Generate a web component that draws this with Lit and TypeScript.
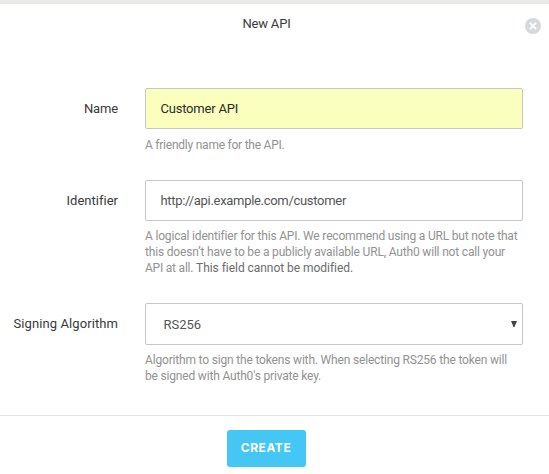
import { LitElement, html, css, type TemplateResult } from "lit";
import { customElement, property } from "lit/decorators.js";
import { styleMap } from "lit/directives/style-map.js";

const track = (value: number) => styleMap({ letterSpacing: `${value}px` });
const line = (text: string, spacing: number) =>
  html`<div class="line" style=${track(spacing)}>${text}</div>`;

@customElement("form-row")
class FormRow extends LitElement {
  @property() label = "";
  @property({ type: Number }) spacing = 0;

  static styles = css`
    :host { display: grid; grid-template-columns: 118px 378px; column-gap: 27px; }
    .label { text-align: right; font-size: 13px; line-height: 41px; color: #3a3a3a; white-space: nowrap; }
  `;

  render() {
    return html`
      <div class="label" style=${track(this.spacing)}>${this.label}</div>
      <div><slot></slot></div>
    `;
  }
}

@customElement("app-root")
class AppRoot extends LitElement {
  static styles = css`
    :host {
      display: flex; flex-direction: column; box-sizing: border-box; height: 474px;
      background: #fff; border-top: 4px solid #eceae8; overflow: hidden;
      font-family: Roboto, "Liberation Sans", sans-serif; color: #3a3a3a;
    }
    header { display: grid; grid-template-columns: 1fr auto 1fr; height: 40px; align-items: center; box-sizing: border-box; padding: 0 8px; }
    h1 { grid-column: 2; margin: 0 0 0 -16px; font-size: 13px; line-height: 20px; font-weight: 400; letter-spacing: -0.197px; }
    .close { justify-self: end; width: 16px; height: 16px; padding: 0; margin-top: 4px; border: 0; background: none; }
    .close svg { display: block; }
    main { height: 372px; box-sizing: border-box; padding-top: 44px; border-bottom: 1px solid #e3e3e3; }
    form-row.name { height: 92px; }
    form-row.identifier { height: 123px; }
    .field {
      display: flex; align-items: center; box-sizing: border-box; height: 41px; padding: 0 5px 0 14.5px;
      border: 1px solid #c6c6c6; border-radius: 2px; font-size: 13px; color: #555;
    }
    .filled { background: #faffbd; color: #2c2c2c; }
    .select { height: 42px; padding-left: 17.5px; justify-content: space-between; }
    .select svg { margin-top: -1px; }
    .help { margin-top: 8px; font-size: 12px; line-height: 16px; color: #929292; }
    .tight { margin-top: 7px; }
    .line { white-space: pre; }
    .strong { color: #6c6c6c; }
    footer { display: flex; justify-content: center; padding: 14px 16px 0 0; }
    .create {
      width: 79px; height: 37px; padding: 0 1px 2px 0; border: 0; border-radius: 3px; background: #44c7f4; color: #fff;
      font: 700 12px Inter, sans-serif; letter-spacing: 0.54px;
    }
  `;

  private help(content: TemplateResult, tight = false) {
    return html`<div class="help ${tight ? "tight" : ""}">${content}</div>`;
  }

  render() {
    return html`
      <header>
        <h1>New API</h1>
        <button class="close" aria-label="Close">
          <svg width="16" height="16" viewBox="0 0 16 16">
            <circle cx="8" cy="8" r="8" fill="#d5d9dc" />
            <path d="M4.9 4.9 11.1 11.1M11.1 4.9 4.9 11.1" stroke="#fff" stroke-width="2" />
          </svg>
        </button>
      </header>
      <main>
        <form-row class="name" label="Name" .spacing=${-0.16}>
          <div class="field filled" style=${track(-0.21)}>Customer API</div>
          ${this.help(line("A friendly name for the API.", -0.235))}
        </form-row>
        <form-row class="identifier" label="Identifier" .spacing=${0.014}>
          <div class="field" style=${track(-0.303)}>http://api.example.com/customer</div>
          ${this.help(html`
            ${line("A logical identifier for this API. We recommend using a URL but note that", -0.181)}
            ${line("this doesn’t have to be a publicly available URL, Auth0 will not call your", -0.174)}
            <div class="line"><span style=${track(-0.214)}>API at all. </span><span class="strong" style=${track(-0.04)}>This field cannot be modified.</span></div>
          `, true)}
        </form-row>
        <form-row label="Signing Algorithm" .spacing=${0.091}>
          <div class="field select">
            <span style=${track(-0.03)}>RS256</span>
            <svg width="6" height="6" viewBox="0 0 6 6"><path d="M0 0H6L3.5 6H2.5Z" fill="#444" /></svg>
          </div>
          ${this.help(html`
            ${line("Algorithm to sign the tokens with. When selecting RS256 the token will", -0.174)}
            ${line("be signed with Auth0's private key.", -0.179)}
          `, true)}
        </form-row>
      </main>
      <footer><button class="create">CREATE</button></footer>
    `;
  }
}
